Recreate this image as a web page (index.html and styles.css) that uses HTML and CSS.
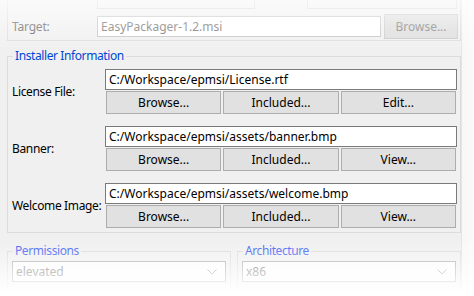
FILE: index.html
```html
<!DOCTYPE html>
<html lang="en">
<head>
  <meta charset="UTF-8">
  <title>EasyPackager - Installer</title>
  <link rel="stylesheet" href="styles.css">
</head>
<body>
  <div class="window">
    <div class="group target-group">
      <div class="ghost-row">
        <span class="ghost ghost-a"></span>
        <span class="ghost ghost-b"></span>
      </div>
      <div class="target-row">
        <span class="target-label">Target:</span>
        <div class="field field-off">EasyPackager-1.2.msi</div>
        <button class="btn btn-off">Browse...</button>
      </div>
    </div>

    <fieldset class="box installer">
      <legend>Installer Information</legend>

      <div class="file-row">
        <span class="row-label">License File:</span>
        <div class="file-col">
          <div class="field">C:/Workspace/epmsi/License.rtf</div>
          <div class="btns">
            <button class="btn">Browse...</button>
            <button class="btn">Included...</button>
            <button class="btn">Edit...</button>
          </div>
        </div>
      </div>

      <div class="file-row">
        <span class="row-label">Banner:</span>
        <div class="file-col">
          <div class="field">C:/Workspace/epmsi/assets/banner.bmp</div>
          <div class="btns">
            <button class="btn">Browse...</button>
            <button class="btn">Included...</button>
            <button class="btn">View...</button>
          </div>
        </div>
      </div>

      <div class="file-row">
        <span class="row-label">Welcome Image:</span>
        <div class="file-col">
          <div class="field">C:/Workspace/epmsi/assets/welcome.bmp</div>
          <div class="btns">
            <button class="btn">Browse...</button>
            <button class="btn">Included...</button>
            <button class="btn">View...</button>
          </div>
        </div>
      </div>
    </fieldset>

    <div class="pair">
      <fieldset class="box small">
        <legend>Permissions</legend>
        <div class="combo">
          <span>elevated</span>
          <svg class="chevron" width="10" height="6" viewBox="0 0 10 6"><polyline points="0.5,0.5 5,5 9.5,0.5" fill="none" stroke="#9a9a9a" stroke-width="1"/></svg>
        </div>
      </fieldset>
      <fieldset class="box small">
        <legend>Architecture</legend>
        <div class="combo">
          <span>x86</span>
          <svg class="chevron" width="10" height="6" viewBox="0 0 10 6"><polyline points="0.5,0.5 5,5 9.5,0.5" fill="none" stroke="#9a9a9a" stroke-width="1"/></svg>
        </div>
      </fieldset>
    </div>
  </div>

  <div class="fade"></div>
</body>
</html>
```

FILE: styles.css
```css
* {
  box-sizing: border-box;
}

body {
  margin: 0;
  background-color: #f7f7f7;
  font-family: "Noto Sans", "Segoe UI", Arial, sans-serif;
  font-size: 12px;
  line-height: 16px;
  color: #000;
  overflow: hidden;
}

.window {
  width: 462px;
  height: 296px;
  padding-left: 7px;
  background-color: #f0f0f0;
  border-right: 1px solid #e4e4e4;
}

/* top group, cut off by the screenshot */
.group {
  width: 454px;
  border: 1px solid #dcdcdc;
  border-top: none;
}

.target-group {
  height: 41px;
  padding: 0 2px 0 4px;
}

.ghost-row {
  display: flex;
  height: 14px;
}

.ghost {
  height: 9px;
  border: 1px solid #d6d6d6;
  border-top: none;
}

.ghost-a {
  width: 158px;
  margin-left: 85px;
}

.ghost-b {
  width: 150px;
  margin-left: 52px;
}

.target-row {
  display: flex;
  align-items: center;
  height: 25px;
}

.target-label {
  width: 85px;
  color: #5f5f5f;
  letter-spacing: -0.2px;
}

.field {
  height: 21px;
  padding: 0 3px;
  border: 1px solid #7a7a7a;
  background: #fff;
  line-height: 19px;
  white-space: nowrap;
  overflow: hidden;
}

.target-row .field {
  width: 284px;
}

.field-off {
  border-color: #c4c4c4;
  color: #6d6d6d;
}

.btn {
  height: 23px;
  padding: 0;
  border: 1px solid #adadad;
  background: #e1e1e1;
  font: inherit;
  color: #000;
}

.btn-off {
  width: 74px;
  height: 25px;
  margin-left: 3px;
  border-color: #c9c9c9;
  background: #dcdcdc;
  color: #7a7a7a;
}

/* group boxes */
.box {
  margin: 0;
  border: 1px solid #dcdcdc;
  min-width: 0;
}

.box legend {
  margin-left: 1px;
  padding: 0 2px;
  color: #0046d5;
  line-height: 16px;
  letter-spacing: -0.4px;
}

.installer {
  width: 454px;
  margin-top: 7px;
  padding: 5px 3px 4px 4px;
}

.file-row {
  display: flex;
  align-items: center;
  margin-bottom: 12px;
}

.file-row:last-child {
  margin-bottom: 0;
}

.row-label {
  width: 93px;
  white-space: nowrap;
  letter-spacing: -0.35px;
}

.file-col {
  width: 352px;
}

.file-col .field {
  margin-bottom: 1px;
}

.btns {
  display: grid;
  grid-template-columns: 1fr 1fr 1fr;
  gap: 2px;
  padding: 0 1px;
}

.pair {
  display: flex;
  gap: 6px;
  width: 454px;
  margin-top: 10px;
}

.small {
  width: 224px;
  padding: 2px 4px 8px 4px;
}

.small legend {
  color: #3f5ff0;
}

.combo {
  display: flex;
  align-items: center;
  justify-content: space-between;
  height: 21px;
  padding: 0 8px 0 3px;
  border: 1px solid #a9a9a9;
  background: #fcfcfc;
  color: #6f6f6f;
}

.chevron {
  display: block;
}

/* soft fade the screenshot has on its edges */
.fade {
  position: fixed;
  inset: 0;
  pointer-events: none;
  background:
    linear-gradient(to bottom, rgba(255, 255, 255, 0.7) 0, rgba(255, 255, 255, 0) 52px),
    linear-gradient(to top, #fff 2px, rgba(255, 255, 255, 0) 56px),
    linear-gradient(to left, rgba(255, 255, 255, 0.5) 0, rgba(255, 255, 255, 0) 14px);
}
```
